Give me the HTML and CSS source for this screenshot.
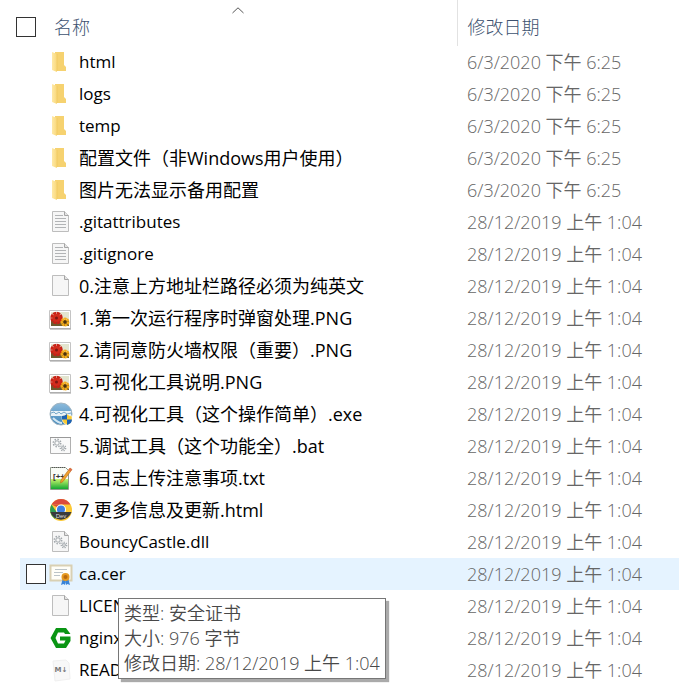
FILE: index.html
```
<!DOCTYPE html>
<html lang="zh-CN">
  <head>
    <meta charset="UTF-8">
    <meta name="viewport" content="width=device-width, initial-scale=1">
    <title>nginx</title>
    <link rel="stylesheet" href="styles.css">
  </head>
  <body>
    <svg class="sprite" aria-hidden="true">
      <defs>
        <linearGradient id="g-folder" x2="1"><stop offset="0" stop-color="#ffe9a6"/><stop offset="1" stop-color="#f8d779"/></linearGradient>
        <linearGradient id="g-npp" x2="0" y2="1"><stop offset="0" stop-color="#c9f56e"/><stop offset="1" stop-color="#14a832"/></linearGradient>
        <linearGradient id="g-globe" x2="0" y2="1"><stop offset="0" stop-color="#8dbbdc"/><stop offset="1" stop-color="#3f86bb"/></linearGradient>
      </defs>
      <symbol id="folder" viewBox="0 0 24 24">
        <path d="M6 2h9v13l2 2v4H6z" fill="#f6d270"/>
        <path d="M3 2l5 2v18l-5-2z" fill="url(#g-folder)"/>
        <path d="M8 4v17" stroke="#eec65c" stroke-width=".6"/>
      </symbol>
      <symbol id="page" viewBox="0 0 24 24">
        <path d="M3.500 1.500h12l4 4v16h-16z" fill="#f6f6f6" stroke="#bdbdbd"/>
        <path d="M15.500 1.500v4h4" fill="#e4e4e4" stroke="#a5a5a5"/>
      </symbol>
      <symbol id="text" viewBox="0 0 24 24">
        <use href="#page"/>
        <path d="M6 5.500h8M6 8.500h11M6 11.500h11M6 14.500h11M6 17.500h11" stroke="#b2b4b6"/>
      </symbol>
      <symbol id="gears" viewBox="0 0 24 24">
        <g fill="none" stroke="#a2a8ac">
          <circle cx="9" cy="9" r="2.200"/>
          <circle cx="9" cy="9" r="3.700" stroke-width="1.500" stroke-dasharray="1.500 1.400"/>
          <circle cx="15" cy="14" r="1.400"/>
          <circle cx="15" cy="14" r="2.700" stroke-width="1.300" stroke-dasharray="1.200 1.200"/>
        </g>
      </symbol>
      <symbol id="dll" viewBox="0 0 24 24">
        <use href="#page"/>
        <use href="#gears" y="1"/>
      </symbol>
      <symbol id="bat" viewBox="0 0 24 24">
        <path d="M1.500 3.500h20v16h-20z" fill="#fafafa" stroke="#b0b0b0"/>
        <path d="M1 3.500h21" stroke="#999"/>
        <use href="#gears" x="-1"/>
      </symbol>
      <symbol id="image" viewBox="0 0 24 24">
        <path d="M.500 4.500h21v18H.500z" fill="#fff" stroke="#c4c4c4"/>
        <path d="M1 23h21" stroke="#999"/>
        <path d="M2 6h18v14H2z" fill="#e3e5cf"/>
        <path d="M2 14h18v6H2z" fill="#6b5a2e"/>
        <circle cx="7.500" cy="12" r="4.500" fill="none" stroke="#c92016" stroke-width="3.500" stroke-dasharray="3 .500"/>
        <circle cx="7.500" cy="12" r="4" fill="#d22b1c"/>
        <circle cx="7.500" cy="12" r="1.500" fill="#7c1712"/>
        <circle cx="16" cy="16" r="3" fill="none" stroke="#f3ab19" stroke-width="3" stroke-dasharray="2.200 .400"/>
        <circle cx="16" cy="16" r="1.700" fill="#4c310c"/>
      </symbol>
      <symbol id="exe" viewBox="0 0 24 24">
        <circle cx="12" cy="12" r="11" fill="url(#g-globe)" stroke="#a3b5c1"/>
        <path d="M2 9h20v5H2z" fill="#e9f2f7"/>
        <path d="M2 11l3-1 2 2 3-2 2 2 3-2 3 2 4-1" fill="none" stroke="#76a8c9"/>
        <path d="M4 16q5 5 9 5" fill="none" stroke="#d2e6f2" stroke-width="2"/>
        <path d="M18 12q2 2 5 2v3q0 4-5 6-5-2-5-6v-3q3 0 5-2z" fill="#f8c932" stroke="#fff" stroke-width=".500"/>
        <path d="M18 12v5.500h-5V14q3 0 5-2zM18 17.500h5q0 4-5 5.500z" fill="#1c62b4"/>
      </symbol>
      <symbol id="cert" viewBox="0 0 24 24">
        <path d="M1.500 3.500h21v15h-21z" fill="#fffef8" stroke="#d9d0b3" stroke-width="2"/>
        <path d="M6 7.500h12M5 10.500h9M5 13.500h6" stroke="#bcc4c8"/>
        <path d="M14 16l-2 7 2.500-1 1.500 1 1-6zM19 16l2 7-2.500-1-1.500 1-1-6z" fill="#3883d8"/>
        <circle cx="16.500" cy="15" r="4" fill="#e69a20"/>
        <circle cx="16.500" cy="15" r="2" fill="#b9690c"/>
      </symbol>
      <symbol id="nginx" viewBox="0 0 24 24">
        <path d="M7 2h10l4.500 6h-5.500l-1-1.500H9L6.500 12 9 17.500h6l1.500-3H11v-4h10.500V15L17 22H7L1.500 12z" fill="#0a9514"/>
      </symbol>
    </svg>

    <table class="files">
      <colgroup>
        <col class="col-gutter">
        <col class="col-check">
        <col>
        <col class="col-date">
      </colgroup>
      <thead>
        <tr>
          <th colspan="2" class="all"><input type="checkbox" aria-label="全选"></th>
          <th class="name-head">
            名称
            <svg class="sort" viewBox="0 0 12 7" aria-hidden="true"><path d="M.500 6L6 .800 11.500 6" fill="none" stroke="#555"/></svg>
          </th>
          <th class="date-head">修改日期</th>
        </tr>
      </thead>
      <tbody>
        <tr><td></td><td></td><td><div class="name en"><svg class="icon"><use href="#folder"/></svg>html</div></td><td class="date">6/3/2020 下午 6:25</td></tr>
        <tr><td></td><td></td><td><div class="name en"><svg class="icon"><use href="#folder"/></svg>logs</div></td><td class="date">6/3/2020 下午 6:25</td></tr>
        <tr><td></td><td></td><td><div class="name en"><svg class="icon"><use href="#folder"/></svg>temp</div></td><td class="date">6/3/2020 下午 6:25</td></tr>
        <tr><td></td><td></td><td><div class="name"><svg class="icon"><use href="#folder"/></svg>配置文件（非Windows用户使用）</div></td><td class="date">6/3/2020 下午 6:25</td></tr>
        <tr><td></td><td></td><td><div class="name"><svg class="icon"><use href="#folder"/></svg>图片无法显示备用配置</div></td><td class="date">6/3/2020 下午 6:25</td></tr>
        <tr><td></td><td></td><td><div class="name en"><svg class="icon"><use href="#text"/></svg>.gitattributes</div></td><td class="date">28/12/2019 上午 1:04</td></tr>
        <tr><td></td><td></td><td><div class="name en"><svg class="icon"><use href="#text"/></svg>.gitignore</div></td><td class="date">28/12/2019 上午 1:04</td></tr>
        <tr><td></td><td></td><td><div class="name"><svg class="icon"><use href="#page"/></svg>0.注意上方地址栏路径必须为纯英文</div></td><td class="date">28/12/2019 上午 1:04</td></tr>
        <tr><td></td><td></td><td><div class="name"><svg class="icon"><use href="#image"/></svg>1.第一次运行程序时弹窗处理.PNG</div></td><td class="date">28/12/2019 上午 1:04</td></tr>
        <tr><td></td><td></td><td><div class="name"><svg class="icon"><use href="#image"/></svg>2.请同意防火墙权限（重要）.PNG</div></td><td class="date">28/12/2019 上午 1:04</td></tr>
        <tr><td></td><td></td><td><div class="name"><svg class="icon"><use href="#image"/></svg>3.可视化工具说明.PNG</div></td><td class="date">28/12/2019 上午 1:04</td></tr>
        <tr><td></td><td></td><td><div class="name"><svg class="icon"><use href="#exe"/></svg>4.可视化工具（这个操作简单）.exe</div></td><td class="date">28/12/2019 上午 1:04</td></tr>
        <tr><td></td><td></td><td><div class="name"><svg class="icon"><use href="#bat"/></svg>5.调试工具（这个功能全）.bat</div></td><td class="date">28/12/2019 上午 1:04</td></tr>
        <tr>
          <td></td>
          <td></td>
          <td>
            <div class="name">
              <svg class="icon" viewBox="0 0 24 24">
                <path d="M1.500 1.500h15l3 3v19h-18z" fill="#f9fcf6" stroke="#929b8d"/>
                <path d="M2 13h17v10H2z" fill="url(#g-npp)"/>
                <path d="M3 1.500h14" stroke="#555" stroke-dasharray="1 1"/>
                <text x="4" y="13" class="npp-mark">[++</text>
                <path d="M21 2l2 1.500-9 12-2.500 1.500.500-3z" fill="#f0a12c" stroke="#b56c16" stroke-width=".600"/>
                <path d="M21 2l2 1.500-1.500 2-2-1.500z" fill="#df6a4e"/>
              </svg>6.日志上传注意事项.txt
            </div>
          </td>
          <td class="date">28/12/2019 上午 1:04</td>
        </tr>
        <tr>
          <td></td>
          <td></td>
          <td>
            <div class="name">
              <svg class="icon" viewBox="0 0 24 24">
                <circle cx="12" cy="12" r="11" fill="#fcc934"/>
                <path d="M2.500 6.500A11 11 0 0 1 21.500 6.500H12z" fill="#dc4a3d"/>
                <path d="M2.500 6.500L9 16l-3 5A11 11 0 0 1 2.500 6.500z" fill="#2f9d53"/>
                <path d="M2.500 6.500L8 9l4-2.500z" fill="#dc4a3d"/>
                <circle cx="12" cy="11.500" r="5" fill="#fff"/>
                <circle cx="12" cy="11.500" r="4" fill="#3e7de0"/>
                <path d="M1.500 14h21A11 11 0 0 1 1.500 14z" fill="#3b3b3b"/>
                <text x="12" y="20" class="dev-mark">Dev</text>
              </svg>7.更多信息及更新.html
            </div>
          </td>
          <td class="date">28/12/2019 上午 1:04</td>
        </tr>
        <tr><td></td><td></td><td><div class="name en"><svg class="icon"><use href="#dll"/></svg>BouncyCastle.dll</div></td><td class="date">28/12/2019 上午 1:04</td></tr>
        <tr class="on">
          <td></td>
          <td class="check"><input type="checkbox" aria-label="ca.cer"></td>
          <td>
            <div class="name en">
              <svg class="icon"><use href="#cert"/></svg>ca.cer
              <div class="tip" role="tooltip">类型: 安全证书<br>大小: 976 字节<br>修改日期: 28/12/2019 上午 1:04</div>
            </div>
          </td>
          <td class="date">28/12/2019 上午 1:04</td>
        </tr>
        <tr><td></td><td></td><td><div class="name en"><svg class="icon"><use href="#page"/></svg>LICENSE</div></td><td class="date">28/12/2019 上午 1:04</td></tr>
        <tr><td></td><td></td><td><div class="name en"><svg class="icon"><use href="#nginx"/></svg>nginx.exe</div></td><td class="date">28/12/2019 上午 1:04</td></tr>
        <tr>
          <td></td>
          <td></td>
          <td>
            <div class="name en">
              <svg class="icon" viewBox="0 0 24 24">
                <path d="M4 3l13-1 3 3 1 16-15 2z" fill="#f8f8f8" stroke="#f0f0f0"/>
                <text x="12" y="14" class="md-mark">M↓</text>
              </svg>README.md
            </div>
          </td>
          <td class="date">28/12/2019 上午 1:04</td>
        </tr>
      </tbody>
    </table>
  </body>
</html>
```
FILE: styles.css
```
* { margin: 0; padding: 0; box-sizing: border-box;}
body { background: #fff; color: #000; font: 18px/24px "Open Sans", "Noto Sans CJK SC", sans-serif;}
.sprite { position: absolute; width: 0; height: 0;}
.npp-mark { font: bold 8px "Liberation Sans", sans-serif; fill: #333;}
.dev-mark { font: 6px "Liberation Sans", sans-serif; fill: #ddd; text-anchor: middle;}
.md-mark { font: bold 7px "DejaVu Sans", sans-serif; fill: #777; text-anchor: middle;}

.files { width: 100%; table-layout: fixed; border-collapse: collapse;}
.col-gutter { width: 20px;}
.col-check { width: 29px;}
.col-date { width: 222px;}

th { height: 46px; padding-top: 7px; font-weight: 300; text-align: left; color: #3d5270;}
.all { padding-left: 16px;}
.name-head { position: relative; padding-left: 5px;}
.date-head { padding-left: 10px; border-left: 1px solid #e2e2e2;}
.sort { position: absolute; top: 7px; left: 45%; width: 12px; height: 7px;}

td { height: 32px; white-space: nowrap;}
.name { position: relative; display: flex; align-items: center; gap: 6px; font-weight: 380;}
.en { font-size: 17px; font-weight: 400;}
.icon { flex: none; width: 24px; height: 24px;}
.date { padding-left: 10px; font-weight: 330; color: #666;}
.check { padding-left: 6px;}
.on td:not(:first-child) { background: #e5f3ff;}

input[type="checkbox"] { display: block; appearance: none; width: 20px; height: 20px; border: 1px solid #333; background: #fff;}
input[type="checkbox"]:checked { background: #0078d7;}

.tip { position: absolute; z-index: 2; top: 36px; left: 69px; padding: 2px 5px; border: 1px solid #767676; background: #fff; box-shadow: 3px 3px 1px #aaa; font-size: 18px; line-height: 25px; font-weight: 330; color: #484848;}
```
